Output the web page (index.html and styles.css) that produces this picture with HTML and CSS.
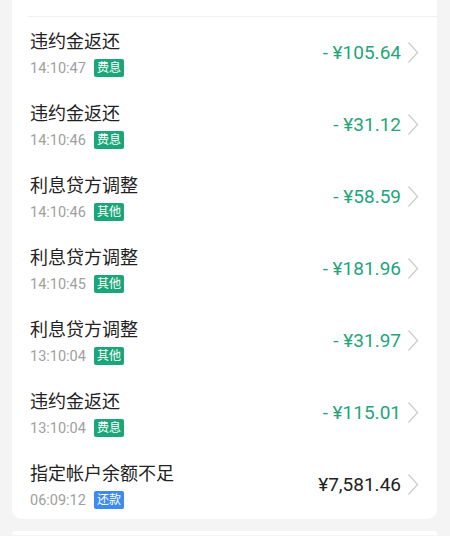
FILE: index.html
```html
<!DOCTYPE html>
<html lang="zh-CN">
  <head>
    <meta charset="UTF-8" />
    <meta name="viewport" content="width=device-width, initial-scale=1.0" />
    <title>账单明细</title>
    <link rel="stylesheet" href="styles.css">
  </head>
  <body>
    <section class="card">
      <ul class="bill-list">
        <li class="bill">
          <div class="bill-info">
            <div class="bill-title">违约金返还</div>
            <div class="bill-meta">
              <span class="bill-time">14:10:47</span>
              <span class="tag tag-green">费息</span>
            </div>
          </div>
          <div class="bill-amount minus">- ¥105.64</div>
          <svg class="chevron" viewBox="0 0 12 23"><path d="M1.5 1.5 L10.5 11.5 L1.5 21.5" /></svg>
        </li>
        <li class="bill">
          <div class="bill-info">
            <div class="bill-title">违约金返还</div>
            <div class="bill-meta">
              <span class="bill-time">14:10:46</span>
              <span class="tag tag-green">费息</span>
            </div>
          </div>
          <div class="bill-amount minus">- ¥31.12</div>
          <svg class="chevron" viewBox="0 0 12 23"><path d="M1.5 1.5 L10.5 11.5 L1.5 21.5" /></svg>
        </li>
        <li class="bill">
          <div class="bill-info">
            <div class="bill-title">利息贷方调整</div>
            <div class="bill-meta">
              <span class="bill-time">14:10:46</span>
              <span class="tag tag-green">其他</span>
            </div>
          </div>
          <div class="bill-amount minus">- ¥58.59</div>
          <svg class="chevron" viewBox="0 0 12 23"><path d="M1.5 1.5 L10.5 11.5 L1.5 21.5" /></svg>
        </li>
        <li class="bill">
          <div class="bill-info">
            <div class="bill-title">利息贷方调整</div>
            <div class="bill-meta">
              <span class="bill-time">14:10:45</span>
              <span class="tag tag-green">其他</span>
            </div>
          </div>
          <div class="bill-amount minus">- ¥181.96</div>
          <svg class="chevron" viewBox="0 0 12 23"><path d="M1.5 1.5 L10.5 11.5 L1.5 21.5" /></svg>
        </li>
        <li class="bill">
          <div class="bill-info">
            <div class="bill-title">利息贷方调整</div>
            <div class="bill-meta">
              <span class="bill-time">13:10:04</span>
              <span class="tag tag-green">其他</span>
            </div>
          </div>
          <div class="bill-amount minus">- ¥31.97</div>
          <svg class="chevron" viewBox="0 0 12 23"><path d="M1.5 1.5 L10.5 11.5 L1.5 21.5" /></svg>
        </li>
        <li class="bill">
          <div class="bill-info">
            <div class="bill-title">违约金返还</div>
            <div class="bill-meta">
              <span class="bill-time">13:10:04</span>
              <span class="tag tag-green">费息</span>
            </div>
          </div>
          <div class="bill-amount minus">- ¥115.01</div>
          <svg class="chevron" viewBox="0 0 12 23"><path d="M1.5 1.5 L10.5 11.5 L1.5 21.5" /></svg>
        </li>
        <li class="bill">
          <div class="bill-info">
            <div class="bill-title">指定帐户余额不足</div>
            <div class="bill-meta">
              <span class="bill-time">06:09:12</span>
              <span class="tag tag-blue">还款</span>
            </div>
          </div>
          <div class="bill-amount">¥7,581.46</div>
          <svg class="chevron" viewBox="0 0 12 23"><path d="M1.5 1.5 L10.5 11.5 L1.5 21.5" /></svg>
        </li>
      </ul>
    </section>
    <section class="card card-next"></section>
  </body>
</html>
```

FILE: styles.css
```css
*,
*::before,
*::after {
  box-sizing: border-box;
}

body {
  margin: 0;
  background-color: #f4f4f4;
  font-family: Roboto, 'Noto Sans CJK SC', sans-serif;
  color: #222;
}

.card {
  margin: 0 13px 0 12px;
  padding-top: 16px;
  background-color: #fff;
  border-radius: 0 0 10px 10px;
}
.card-next {
  margin-top: 12px;
  height: 4px;
  padding-top: 0;
  border-radius: 10px 10px 0 0;
}

.bill-list {
  list-style: none;
  margin: 0 0 0 16px;
  padding: 0;
  border-top: 1px solid #efefef;
}

.bill {
  display: flex;
  align-items: center;
  padding: 13px 18px 11px 2px;
}
.bill:last-child {
  padding-bottom: 9px;
}

.bill-info {
  flex: 1;
}
.bill-title {
  font-size: 18px;
  line-height: 24px;
  color: #222;
}
.bill-meta {
  display: flex;
  align-items: center;
  gap: 8px;
  margin-top: 4px;
  height: 20px;
}
.bill-time {
  font-size: 14.5px;
  color: #a0a0a0;
}

.tag {
  display: inline-block;
  padding: 0 3px;
  height: 18px;
  line-height: 18px;
  font-size: 12px;
  color: #fff;
  border-radius: 2px;
}
.tag-green {
  background-color: #1aa678;
}
.tag-blue {
  background-color: #3d8bf0;
}

.bill-amount {
  margin-right: 6px;
  margin-bottom: 3px;
  font-size: 19px;
  color: #222;
}
.bill-amount.minus {
  color: #23a57a;
}

.chevron {
  width: 12px;
  height: 23px;
  margin-bottom: 3px;
  fill: none;
  stroke: #cdcdcd;
  stroke-width: 1.3;
}
```
